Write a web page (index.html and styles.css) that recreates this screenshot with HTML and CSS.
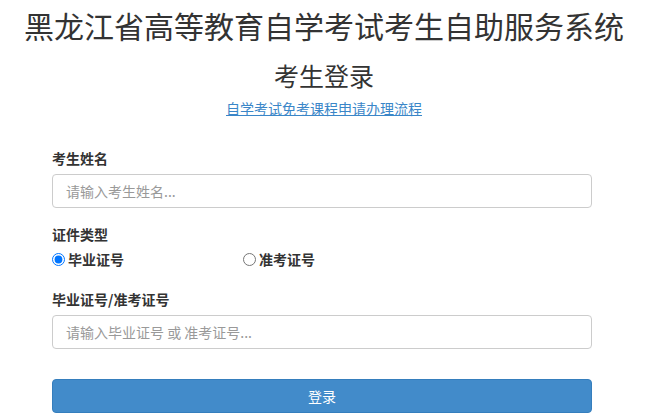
FILE: index.html
```html
<!DOCTYPE html>
<html lang="zh-CN">
<head>
<meta charset="utf-8">
<title>考生登录</title>
<link rel="stylesheet" href="styles.css">
</head>
<body>
<h1 class="site-title">黑龙江省高等教育自学考试考生自助服务系统</h1>
<h2 class="page-title">考生登录</h2>
<div class="link-row"><a class="flow-link" href="#">自学考试免考课程申请办理流程</a></div>
<form class="login-form">
  <div class="field">
    <label class="field-label">考生姓名</label>
    <input class="text-input" type="text" placeholder="请输入考生姓名...">
  </div>
  <div class="field field-radio">
    <label class="field-label">证件类型</label>
    <div class="radio-row">
      <label class="radio-option"><input type="radio" name="idtype" checked><span>毕业证号</span></label>
      <label class="radio-option"><input type="radio" name="idtype"><span>准考证号</span></label>
    </div>
  </div>
  <div class="field">
    <label class="field-label">毕业证号/准考证号</label>
    <input class="text-input" type="text" placeholder="请输入毕业证号 或 准考证号...">
  </div>
  <button class="submit-btn" type="button">登录</button>
</form>
</body>
</html>
```
FILE: styles.css
```css
html, body {
  margin: 0;
  padding: 0;
  background: #fff;
}
body {
  font-family: "Noto Sans CJK SC", "Liberation Sans", sans-serif;
  color: #333;
  font-size: 14px;
}
.site-title {
  margin: 5px 0 0;
  font-size: 30px;
  line-height: 40px;
  font-weight: 400;
  text-align: center;
  color: #333;
}
.page-title {
  margin: 15px 0 0;
  font-size: 25px;
  line-height: 30px;
  font-weight: 400;
  text-align: center;
  color: #333;
}
.link-row {
  margin-top: 8px;
  text-align: center;
  line-height: 20px;
}
.flow-link {
  font-size: 14px;
  color: #3a86c8;
  text-decoration: underline;
}
.login-form {
  width: 540px;
  margin: 30px 0 0 52px;
}
.field {
  display: flex;
  flex-direction: column;
}
.field-label {
  font-weight: 700;
  font-size: 14px;
  line-height: 20px;
  color: #333;
  margin-bottom: 6px;
}
.text-input {
  box-sizing: border-box;
  height: 34px;
  width: 100%;
  border: 1px solid #ccc;
  border-radius: 4px;
  padding: 6px 13px;
  font-family: inherit;
  font-size: 14px;
  color: #555;
  outline: none;
  margin: 0;
}
.text-input::placeholder {
  color: #999;
}
.field-radio {
  margin-top: 16px;
}
.field-radio .field-label {
  margin-bottom: 4px;
}
.radio-row {
  display: grid;
  grid-template-columns: 191px auto;
  line-height: 22px;
}
.radio-option {
  display: flex;
  align-items: center;
  gap: 3px;
  font-weight: 700;
}
.radio-option input {
  margin: 0;
  width: 13px;
  height: 13px;
}
.field-radio + .field {
  margin-top: 19px;
}
.submit-btn {
  display: block;
  box-sizing: border-box;
  width: 100%;
  height: 34px;
  margin-top: 30px;
  background: #428bca;
  border: 1px solid #357ebd;
  border-radius: 4px;
  color: #fff;
  font-family: inherit;
  font-size: 14px;
  padding: 0;
}
```
